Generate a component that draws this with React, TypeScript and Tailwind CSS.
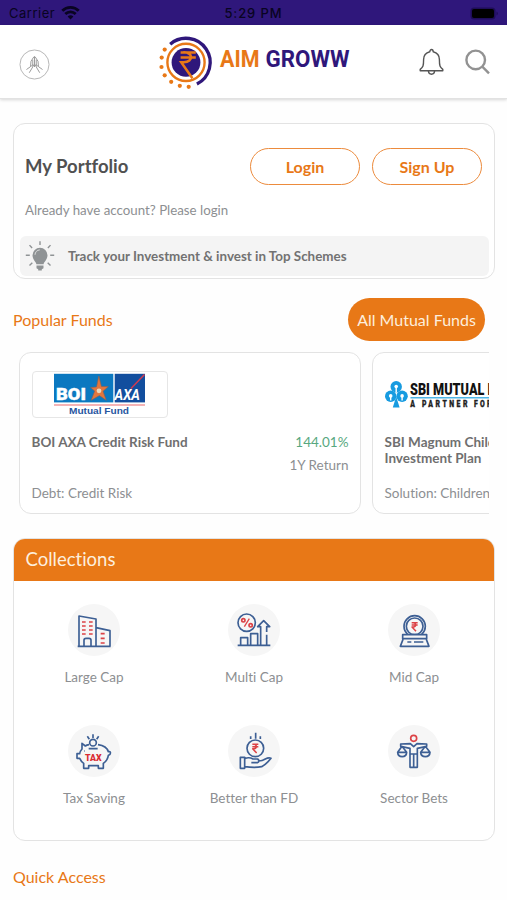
import type { ReactNode } from 'react';

interface Fund {
    name: string;
    category: string;
    returns?: string;
    logo: ReactNode;
}

interface Collection {
    label: string;
    icon: ReactNode;
}

const NAVY = '#3d5f94';
const RED = '#dc4347';

function StatusBar() {
    return (
        <div className="h-[25px] bg-[#2f177b] text-[#090422] px-[9px] grid grid-cols-3 items-center font-['Inter',sans-serif] text-[13px]">
            <div className="flex items-center gap-1.5 tracking-[0.5px] pt-[3px]">
                <span>Carrier</span>
                <svg width="19" height="14" viewBox="0 0 19 14" fill="none" stroke="currentColor" strokeWidth="2.8" className="-mt-[2px]">
                    <path d="M1.3 4.8a11.6 11.6 0 0 1 16.4 0" />
                    <path d="M4.3 8.1a7.4 7.4 0 0 1 10.4 0" />
                    <path d="M9.5 13.6 6.6 10.6a4.2 4.2 0 0 1 5.8 0z" fill="currentColor" stroke="none" />
                </svg>
            </div>
            <div className="text-center font-medium tracking-[0.9px] pt-[3px]">5:29 PM</div>
            <div className="flex justify-end pt-[1px]">
                <svg width="28" height="13" viewBox="0 0 28 13">
                    <rect x="0.5" y="0.5" width="25" height="12" rx="3.5" fill="#1e0d58" />
                    <rect x="2" y="2" width="22" height="9" rx="2" fill="#000" />
                    <path d="M26.5 4.5v4q1.3-.6 1.3-2t-1.3-2" fill="#1e0d58" />
                </svg>
            </div>
        </div>
    );
}

function BrandLogo() {
    return (
        <svg width="194" height="56" viewBox="158 35 194 56" className="mt-[3px]" role="img" aria-label="AIM GROWW">
            <circle cx="186" cy="62.4" r="14.4" fill="#2f177b" />
            <circle cx="186" cy="62.4" r="18.6" fill="none" stroke="#e87817" strokeWidth="2.4" />
            <path d="M170.2 44.2A24.15 24.15 0 1 1 196.9 84" fill="none" stroke="#2f177b" strokeWidth="3.3" />
            <g fill="#e87817">
                <circle cx="164.7" cy="49.6" r="2.1" />
                <circle cx="161.7" cy="57.6" r="2.1" />
                <circle cx="161.5" cy="67" r="2.1" />
                <circle cx="164.7" cy="75.3" r="2.1" />
                <circle cx="171.2" cy="81.8" r="2.1" />
                <circle cx="179.8" cy="85.8" r="2.1" />
                <circle cx="188.7" cy="86.8" r="2.1" />
            </g>
            <path d="M180.6 52.4h15.2M180.6 57.6h15.2M183 52.4c10.5-.6 10.8 9.6.8 9.8h-2.6l11.2 16" fill="none" stroke="#e87817" strokeWidth="2.5" />
            <g fontFamily="Roboto, sans-serif" fontSize="23" fontWeight="700">
                <text x="220" y="67.3" fill="#e87817" textLength="39.5" lengthAdjust="spacingAndGlyphs">AIM</text>
                <text x="265.5" y="67.3" fill="#2f177b" textLength="84" lengthAdjust="spacingAndGlyphs">GROWW</text>
            </g>
        </svg>
    );
}

function Header() {
    return (
        <header className="h-[74px] bg-white pl-[19px] pr-[17px] flex items-center justify-between border-b border-[#e2e2e2] shadow-[0_1px_3px_rgba(0,0,0,0.16)]">
            <div className="flex-1 pt-1.5">
                <svg width="31" height="31" viewBox="0 0 32 32" fill="none" stroke="#999" strokeWidth="1">
                    <circle cx="16" cy="16" r="15" stroke="#b5b5b5" />
                    <path d="M16 7.5v11M15.4 8 12.4 12.6l-.5 5.6-4.2 3M16.6 8l3 4.6.5 5.6 4.2 3" />
                    <path d="M14.2 11v7.5l-3.6 6M17.8 11v7.5l3.6 6M12 18.4l2.3-2.4 1.7 2.4 1.7-2.4 2.3 2.4" />
                </svg>
            </div>
            <BrandLogo />
            <div className="flex-1 flex items-center justify-end gap-[21px]">
                <svg width="25" height="28" viewBox="0 0 25 28" fill="none" stroke="#555" strokeWidth="1.4" strokeLinejoin="round">
                    <path d="M10.8 3.8c0-3 3.4-3 3.4 0 4.2 1 6.2 3.8 6.2 7.8 0 6.4.5 7.6 3.4 9.8v1.4H1.2v-1.4c2.9-2.2 3.4-3.4 3.4-9.8 0-4 2-6.8 6.2-7.8z" />
                    <path d="M9.4 23c.4 4.3 5.8 4.3 6.2 0" />
                </svg>
                <svg width="25" height="26" viewBox="0 0 25 26" fill="none" stroke="#929292" strokeWidth="2.4">
                    <circle cx="10.7" cy="10.9" r="9.3" />
                    <path d="M17.3 17.7 24 24.4" />
                </svg>
            </div>
        </header>
    );
}

function BulbIcon() {
    return (
        <svg width="30" height="32" viewBox="0 0 30 32" fill="none" stroke="#8f9395" strokeWidth="1.4">
            <path d="M15 1.3v3.6M4.5 5.1l2.6 2.9M25.5 5.1l-2.6 2.9M.8 15.2h4M29.2 15.2h-4M4.5 25.5l2.8-2.7M25.5 25.5l-2.8-2.7" />
            <path d="M11.4 24.2c0-2.2-3.9-4.4-3.9-9a7.5 7.5 0 0 1 15 0c0 4.6-3.9 6.8-3.9 9z" fill="#8f9395" stroke="none" />
            <path d="M11.5 25.4h7v2.8l-1.7 1v1.4h-3.6v-1.4l-1.7-1z" fill="#8f9395" stroke="none" />
            <path d="M10 14.8a5 5 0 0 1 4.8-4.9" stroke="#dadcdc" strokeWidth="1" />
        </svg>
    );
}

function PortfolioCard() {
    return (
        <section className="h-[156px] rounded-[12px] border-[1.5px] border-[#e3e3e3] bg-white px-[5px] pt-6">
            <div className="flex items-center pl-[6px] pr-[7px] gap-3">
                <h1 className="flex-1 text-[18.5px] font-bold text-[#515151]">My Portfolio</h1>
                <button className="w-[110px] h-[37px] rounded-full border-[1.5px] border-[#ec8b3d] text-[#e87817] text-[16px] font-bold">Login</button>
                <button className="w-[110px] h-[37px] rounded-full border-[1.5px] border-[#ec8b3d] text-[#e87817] text-[16px] font-bold">Sign Up</button>
            </div>
            <p className="pl-[6px] mt-[15px] text-[13.3px] leading-5 text-[#8d8f92]">Already have account? Please login</p>
            <div className="mt-[16px] h-10 rounded-md bg-[#f4f4f4] flex items-center pl-[5px] gap-[13px] ml-[1px]">
                <BulbIcon />
                <span className="text-[13.4px] font-bold text-[#727272]">Track your Investment &amp; invest in Top Schemes</span>
            </div>
        </section>
    );
}

function BoiLogo() {
    return (
        <div className="w-[136px] h-[47px] shrink-0 rounded-[4px] border border-[#e6e6e6]">
            <svg width="134" height="45" viewBox="33 372.5 134 45">
                <rect x="54" y="374.3" width="59.3" height="28.6" fill="#0b78c0" />
                <rect x="114.7" y="374.3" width="30.3" height="28.6" fill="#124e9e" />
                <path d="M54 405.5h91" stroke="#f29a9c" strokeWidth="1.5" />
                <text x="56" y="400" fill="#fff" stroke="#fff" strokeWidth=".4" fontFamily="Roboto, sans-serif" fontSize="17" fontWeight="900" textLength="30" lengthAdjust="spacingAndGlyphs">BOI</text>
                <path d="m98.8 376.5 2.6 10.5 6.9.1-5.3 4.7 3.3 9-6.9-4.7-8.2 4.7 3.5-9.2-4.2-3.6 6-.6z" fill="#e2763d" stroke="#8b5f50" strokeWidth=".6" />
                <circle cx="99" cy="391.3" r="2.4" fill="#e9d9bd" />
                <path d="m131 389 13.5-14" stroke="#d13b50" strokeWidth="1.5" />
                <text x="114.5" y="400" fill="#fff" fontFamily="Roboto, sans-serif" fontSize="15.5" fontStyle="italic" fontWeight="700" textLength="25.5" lengthAdjust="spacingAndGlyphs">AXA</text>
                <text x="69" y="414" fill="#28569f" fontFamily="Liberation Sans, sans-serif" fontSize="8.8" fontWeight="700" textLength="60" lengthAdjust="spacingAndGlyphs">Mutual Fund</text>
            </svg>
        </div>
    );
}

function SbiLogo() {
    return (
        <div className="h-[47px] w-[136px] shrink-0">
            <svg width="136" height="47" viewBox="385.5 371.5 136 47">
                <g fill="#179be0">
                    <circle cx="396.7" cy="387.3" r="5.7" />
                    <circle cx="391.2" cy="396.7" r="5.7" />
                    <circle cx="402.6" cy="396.7" r="5.7" />
                    <path d="m396.7 397 3.4 11h-6.8z" />
                </g>
                <g fill="#fff">
                    <circle cx="396.7" cy="387" r="1.8" />
                    <path d="M396 387h1.4v6h-1.4z" />
                    <circle cx="391.2" cy="396.4" r="1.8" />
                    <path d="M390.5 396.4h1.4v4.5h-1.4z" />
                    <circle cx="402.6" cy="396.4" r="1.8" />
                    <path d="M401.9 396.4h1.4v4.5h-1.4z" />
                </g>
                <text x="410.5" y="395.3" fill="#111" fontFamily="Roboto, sans-serif" fontSize="17" fontWeight="900" textLength="110" lengthAdjust="spacingAndGlyphs">SBI MUTUAL FUND</text>
                <path d="M411 398.3h110" stroke="#4db4e6" strokeWidth="1.6" />
                <g fill="#222" stroke="#222" strokeWidth=".3" fontFamily="Roboto, sans-serif" fontSize="8.6" fontWeight="900">
                    <g transform="scale(.8 1)">
                        <text x="513.5" y="407.3">A</text>
                        <text x="528" y="407.3" textLength="57" lengthAdjust="spacing">PARTNER</text>
                        <text x="593" y="407.3" textLength="55" lengthAdjust="spacing">FOR LIFE</text>
                    </g>
                </g>
            </svg>
        </div>
    );
}

const funds: Fund[] = [
    { name: 'BOI AXA Credit Risk Fund', category: 'Debt: Credit Risk', returns: '144.01%', logo: <BoiLogo /> },
    { name: "SBI Magnum Children's Benefit\nInvestment Plan", category: "Solution: Children's", logo: <SbiLogo /> },
];

function FundCard({ fund }: { fund: Fund }) {
    return (
        <article className="w-[342px] h-[162px] shrink-0 rounded-[12px] border-[1.5px] border-[#e3e3e3] bg-white px-[11.5px] pt-[18px] flex flex-col">
            {fund.logo}
            <div className="flex justify-between mt-[16px] h-[49px]">
                <h3 className="text-[13.5px] leading-4 font-bold text-[#6f6f6f] whitespace-pre-line">{fund.name}</h3>
                {fund.returns && (
                    <div className="text-right text-[13.5px] leading-[23px] text-[#8d8f92] -mt-[3px]">
                        <p className="text-[#57a880]">{fund.returns}</p>
                        <p>1Y Return</p>
                    </div>
                )}
            </div>
            <p className="text-[13.5px] leading-5 text-[#8d8f92]">{fund.category}</p>
        </article>
    );
}

function Rupee({ x, y }: { x: number; y: number }) {
    return (
        <path
            transform={`translate(${x} ${y})`}
            d="M-9-12H9M-9-5H9M-6-12C5-13 6 1-4 1h-4L4 14"
            stroke={RED}
            strokeWidth="4.5"
        />
    );
}

const collections: Collection[] = [
    {
        label: 'Large Cap',
        icon: (
            <>
                <path d="M29 127h99M33 127V36l51 9v82M84 71l42 9v47M48 127v-18q0-6 6-6h9q6 0 6 6v18" />
                <path d="M42 54h11M63 54h11M42 66h11M63 66h11M42 78h11M63 78h11M42 90h11M63 90h11M98 89h12M98 103h12M98 117h12" stroke={RED} />
            </>
        ),
    },
    {
        label: 'Multi Cap',
        icon: (
            <>
                <circle cx="56" cy="56" r="26" />
                <path d="M29 124h98M38 124v-23h21v23M68 124V89h21v35M98 124V68h-9l18-18 18 18h-9v16M116 92v32" />
                <path d="m49 68 15-24" stroke={RED} strokeWidth="4" />
                <circle cx="46" cy="49" r="5" stroke={RED} />
                <circle cx="68" cy="64" r="5" stroke={RED} />
            </>
        ),
    },
    {
        label: 'Mid Cap',
        icon: (
            <>
                <circle cx="80" cy="67" r="32" />
                <circle cx="80" cy="67" r="25" />
                <path d="M44 92h72v12H44zM45 106l-8 21h86l-8-21M58 114h12M78 114h28" fill="#f6f6f6" />
                <Rupee x={80} y={68} />
            </>
        ),
    },
    {
        label: 'Tax Saving',
        icon: (
            <>
                <circle cx="75" cy="53" r="10" />
                <path d="M75 28v11M58 34l6 9M92 34l-6 9M62 71h27" />
                <path d="M63 59q-7 1-11 4l-10-8v17q-7 8-7 14h-8v14h8q4 9 12 15v15h15v-8h29v8h15v-15q13-9 15-24c9-2 8-14 0-11q-5-17-31-21" />
                <path d="M49 78h2" />
                <text x="51" y="107" fill="#d92c33" stroke="none" fontFamily="Roboto, sans-serif" fontWeight="900" fontSize="27" textLength="50" lengthAdjust="spacingAndGlyphs">TAX</text>
            </>
        ),
    },
    {
        label: 'Better than FD',
        icon: (
            <>
                <path d="M68 34v8M83 23v18M97 34v8" />
                <circle cx="82" cy="70" r="25" />
                <path d="M37 97h13v33H37zM50 101q13-6 25 1h14q8 7-1 11H70M92 108q11 0 20-6 10-5 17-2-14 18-28 25-20 4-51 0" />
                <Rupee x={82} y={70} />
            </>
        ),
    },
    {
        label: 'Sector Bets',
        icon: (
            <>
                <circle cx="77" cy="40" r="9" stroke={RED} />
                <path d="M66 127V70L38 64v-7l29-1 10 9 10-9 29 1v7l-28 6v57zM66 87h22M77 87v40" />
                <path d="m42 64-13 18h27L42 64M112 64 98 82h28l-14-18M29 82c1 17 26 17 27 0M98 82c1 17 27 17 28 0" />
            </>
        ),
    },
];

function Collections() {
    return (
        <section className="mt-6 h-[303px] rounded-[12px] border-[1.5px] border-[#e3e3e3] overflow-hidden bg-white">
            <h2 className="h-[43px] -mx-[1px] -mt-[1px] bg-[#e87817] pl-[12.5px] pt-[1px] flex items-center text-[18.5px] text-[#fdeedd]">Collections</h2>
            <div className="grid grid-cols-3 pt-[23px]">
                {collections.map((item) => (
                    <div key={item.label} className="h-[121px] flex flex-col items-center">
                        <svg width="52" height="52" viewBox="0 0 156 156" className="rounded-full bg-[#f6f6f6]" fill="none" stroke={NAVY} strokeWidth="5" strokeLinejoin="round">
                            {item.icon}
                        </svg>
                        <span className="mt-[11px] text-[13.5px] leading-5 text-[#8d8f92]">{item.label}</span>
                    </div>
                ))}
            </div>
        </section>
    );
}

export default function App() {
    return (
        <div className="w-[507px] h-[900px] overflow-hidden bg-[#fefefe] font-['Lato',sans-serif] [font-variant-ligatures:none]">
            <StatusBar />
            <Header />
            <main className="pl-[13px] pr-3 pt-6">
                <PortfolioCard />
                <div className="mt-[19px] flex items-center justify-between pr-[10px]">
                    <h2 className="text-[16px] text-[#e87817]">Popular Funds</h2>
                    <button className="w-[137px] h-[43px] rounded-full bg-[#e87817] text-[16px] text-[#fdeedd]">All Mutual Funds</button>
                </div>
                <div className="mt-[11px] ml-[6px] mr-[6px] flex gap-[11px] overflow-hidden">
                    {funds.map((fund) => (
                        <FundCard key={fund.name} fund={fund} />
                    ))}
                </div>
                <Collections />
                <h2 className="mt-6 text-[16px] text-[#e87817]">Quick Access</h2>
            </main>
        </div>
    );
}
